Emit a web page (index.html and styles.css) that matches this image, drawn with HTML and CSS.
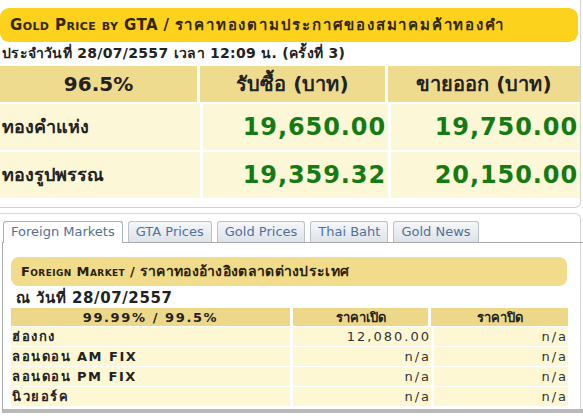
FILE: index.html
```html
<!DOCTYPE html>
<html lang="th">
<head>
<meta charset="utf-8">
<title>Gold Price by GTA</title>
<link rel="stylesheet" href="styles.css">
</head>
<body>
<div class="top-box">
  <div class="banner"><span class="sc">Gold Price by GTA /</span> <span class="th-wide">ราคาทองตามประกาศของสมาคมค้าทองคำ</span></div>
  <div class="stamp">ประจำวันที่ 28/07/2557 เวลา 12:09 น. (ครั้งที่ 3)</div>
  <table class="gta">
    <tr><th class="c1">96.5%</th><th class="c2">รับซื้อ (บาท)</th><th class="c3">ขายออก (บาท)</th></tr>
    <tr><td class="name">ทองคำแห่ง</td><td class="price">19,650.00</td><td class="price">19,750.00</td></tr>
    <tr><td class="name">ทองรูปพรรณ</td><td class="price">19,359.32</td><td class="price">20,150.00</td></tr>
  </table>
</div>
<div class="tab-box">
  <ul class="tabs">
    <li class="tab active">Foreign Markets</li>
    <li class="tab">GTA Prices</li>
    <li class="tab">Gold Prices</li>
    <li class="tab">Thai Baht</li>
    <li class="tab">Gold News</li>
  </ul>
  <div class="panel">
    <div class="banner2"><span class="sc">Foreign Market /</span> <span class="th-wide2">ราคาทองอ้างอิงตลาดต่างประเทศ</span></div>
    <div class="asof">ณ วันที่ 28/07/2557</div>
    <table class="fm">
      <tr><th class="f1">99.99% / 99.5%</th><th class="f2">ราคาเปิด</th><th class="f3">ราคาปิด</th></tr>
      <tr><td class="lbl">ฮ่องกง</td><td class="val">12,080.00</td><td class="val">n/a</td></tr>
      <tr><td class="lbl">ลอนดอน AM FIX</td><td class="val">n/a</td><td class="val">n/a</td></tr>
      <tr><td class="lbl">ลอนดอน PM FIX</td><td class="val">n/a</td><td class="val">n/a</td></tr>
      <tr><td class="lbl">นิวยอร์ค</td><td class="val">n/a</td><td class="val">n/a</td></tr>
    </table>
  </div>
</div>
</body>
</html>
```
FILE: styles.css
```css
html, body {
  margin: 0;
  padding: 0;
  background: #ffffff;
}
body {
  width: 583px;
  height: 420px;
  overflow: hidden;
  font-family: "DejaVu Sans", "Noto Sans", sans-serif;
  color: #222;
}
.top-box {
  width: 580px;
  padding-top: 8px;
  border-right: 1px solid #d4d4d4;
  border-bottom: 1px solid #cfcfcf;
  border-bottom-right-radius: 6px;
  padding-bottom: 7px;
}
.banner {
  width: 568px;
  height: 34px;
  line-height: 34px;
  background: #fcd21c;
  border-radius: 9px;
  padding-left: 10px;
  font-weight: bold;
  font-size: 15px;
  color: #33270a;
  white-space: nowrap;
}
.sc {
  font-variant: small-caps;
  letter-spacing: 0.4px;
}
.th-wide {
  letter-spacing: 1.8px;
}
.stamp {
  font-size: 14px;
  font-weight: bold;
  letter-spacing: 0.3px;
  padding-left: 2px;
  height: 24px;
  line-height: 22px;
  white-space: nowrap;
}
.gta {
  border-collapse: separate;
  border-spacing: 0;
  width: 580px;
}
.gta th {
  background: #efdb8d;
  height: 36px;
  line-height: 24px;
  font-size: 20px;
  font-weight: bold;
  color: #222;
  padding: 0;
  border-bottom: 2px solid #fff;
}
.gta .c1 { width: 197px; border-right: 3px solid #fff; }
.gta .c2 { width: 185px; border-right: 3px solid #fff; }
.gta td {
  background: #fcf7d6;
  height: 46px;
  line-height: 28px;
  padding: 0;
  border-bottom: 2px solid #fff;
}
.gta td + td { border-left: 3px solid #fff; }
.gta .name {
  font-size: 18px;
  font-weight: bold;
  padding-left: 2px;
}
.gta .price {
  text-align: right;
  font-size: 24px;
  letter-spacing: 0.9px;
  font-weight: bold;
  color: #157a12;
  padding-right: 2px;
}
.tab-box {
  margin-top: 5px;
  width: 580px;
  border-top: 1px solid #d4d4d4;
  border-right: 1px solid #d4d4d4;
  border-top-right-radius: 6px;
  padding-top: 7px;
}
.tabs {
  list-style: none;
  margin: 0;
  padding: 0 0 0 3px;
  display: flex;
  gap: 5px;
  height: 21px;
}
.tab {
  font-size: 13px;
  color: #52709a;
  padding: 0 7px;
  line-height: 20px;
  height: 20px;
  background: linear-gradient(#f5f7f9, #dde3ea);
  border: 1px solid #b9c2cc;
  border-bottom: 0;
  border-radius: 3px 3px 0 0;
}
.tab.active {
  background: #fff;
  border-color: #9fb0c4;
  height: 21px;
}
.panel {
  margin-left: 2px;
  width: 577px;
  border: 1px solid #a9a9a9;
  border-bottom: 4px solid #b9b9b9;
  padding: 14px 0 0 8px;
  height: 152px;
  box-sizing: content-box;
}
.banner2 {
  width: 546px;
  height: 29px;
  line-height: 29px;
  background: #f0dc8a;
  border-radius: 8px;
  padding-left: 10px;
  font-size: 13px;
  font-weight: bold;
  color: #2a2208;
  white-space: nowrap;
}
.th-wide2 {
  font-size: 14px;
  letter-spacing: 0.3px;
}
.asof {
  font-size: 15px;
  font-weight: bold;
  letter-spacing: 0.6px;
  padding-left: 5px;
  height: 22px;
  line-height: 24px;
}
.fm {
  border-collapse: separate;
  border-spacing: 0;
  width: 557px;
}
.fm th {
  background: #edd88a;
  height: 18px;
  line-height: 17px;
  padding: 0;
  font-size: 13px;
  font-weight: bold;
  color: #222;
}
.fm .f1 { width: 279px; border-right: 3px solid #fff; letter-spacing: 1.6px; }
.fm .f2 { width: 135px; border-right: 3px solid #fff; }
.fm td {
  background: #fdf7d3;
  height: 19px;
  line-height: 17px;
  padding: 0;
  font-size: 13px;
  border-top: 1px solid #fff;
}
.fm .lbl {
  font-weight: bold;
  letter-spacing: 1.5px;
  padding-left: 1px;
  border-right: 3px solid #fff;
}
.fm .val {
  text-align: right;
  color: #333;
  letter-spacing: 2px;
  padding-right: 0;
}
.fm .val + .val { border-left: 3px solid #fff; }
```
